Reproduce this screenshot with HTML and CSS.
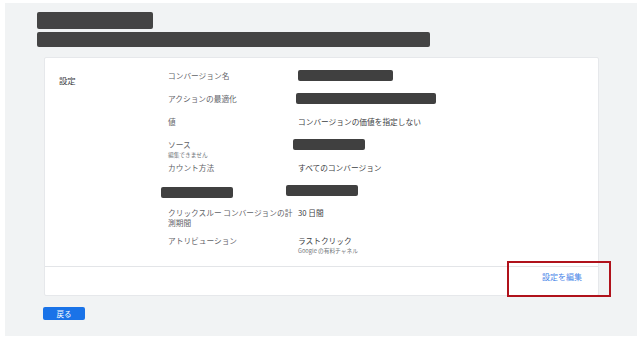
FILE: index.html
```html
<!DOCTYPE html>
<html lang="ja">

<head>
    <meta charset="UTF-8">
    <meta name="viewport" content="width=device-width, initial-scale=1.0">
    <title>コンバージョン設定</title>
    <link rel="stylesheet" href="styles.css">
</head>

<body>
    <div class="page">
        <div class="title-bar title-short"></div>
        <div class="title-bar title-long"></div>

        <div class="card">
            <div class="card-body">
                <div class="section-title">設定</div>
                <div class="rows">
                    <div class="row">
                        <div class="label">コンバージョン名</div>
                        <div class="value"><span class="redact redact-name"></span></div>
                    </div>
                    <div class="row">
                        <div class="label">アクションの最適化</div>
                        <div class="value"><span class="redact redact-action"></span></div>
                    </div>
                    <div class="row">
                        <div class="label">値</div>
                        <div class="value">コンバージョンの価値を指定しない</div>
                    </div>
                    <div class="row row-sub">
                        <div class="label">ソース<div class="sub">編集できません</div></div>
                        <div class="value"><span class="redact redact-source"></span></div>
                    </div>
                    <div class="row">
                        <div class="label">カウント方法</div>
                        <div class="value">すべてのコンバージョン</div>
                    </div>
                    <div class="row">
                        <div class="label"><span class="redact redact-label"></span></div>
                        <div class="value"><span class="redact redact-value"></span></div>
                    </div>
                    <div class="row row-wrap">
                        <div class="label">クリックスルー コンバージョンの計測期間</div>
                        <div class="value">30 日間</div>
                    </div>
                    <div class="row row-last">
                        <div class="label">アトリビューション</div>
                        <div class="value">ラストクリック<div class="sub">Google の有料チャネル</div></div>
                    </div>
                </div>
            </div>
            <div class="card-footer">
                <a href="javascript:;" class="edit-link">設定を編集</a>
            </div>
            <div class="highlight"></div>
        </div>

        <a href="javascript:;" class="back-btn">戻る</a>
    </div>
</body>

</html>
```

FILE: styles.css
```css
body {
    margin: 0;
    background-color: #fff;
    font-family: "Noto Sans CJK JP", "Noto Sans", sans-serif;
}

.page {
    box-sizing: border-box;
    margin: 3px 3px 0 5px;
    width: 632px;
    height: 333px;
    padding: 9px 0 0 32px;
    background-color: #f1f3f4;
}

.title-bar {
    background-color: #444;
    border-radius: 2px;
}

.title-short {
    width: 116px;
    height: 17px;
}

.title-long {
    width: 393px;
    height: 15px;
    margin-top: 3px;
}

.card {
    position: relative;
    width: 555px;
    margin: 10px 0 0 7px;
    background-color: #fff;
    border: 1px solid #e6e8eb;
    border-radius: 2px;
    box-sizing: border-box;
}

.card-body {
    display: flex;
    padding: 12px 0 10px 14px;
    border-bottom: 1px solid #e3e5e8;
}

.section-title {
    width: 109px;
    margin-top: 5px;
    font-size: 8.4px;
    line-height: 11px;
    color: #3c4043;
}

.rows {
    flex: 1;
}

.row {
    display: grid;
    grid-template-columns: 130px 1fr;
    padding-bottom: 12px;
    font-size: 7.7px;
    line-height: 11px;
    color: #5f6368;
}

.row-sub {
    padding-bottom: 2px;
}

.row-wrap {
    padding-bottom: 7px;
    line-height: 10px;
}

.row-last {
    padding-bottom: 0;
}

.value {
    color: #3c4043;
}

.sub {
    font-size: 5.7px;
    line-height: 10px;
    color: #70757a;
}

.redact {
    display: block;
    height: 11px;
    background-color: #404040;
    border-radius: 2px;
}

.redact-name {
    width: 95px;
}

.redact-action {
    width: 140px;
    margin-left: -2px;
}

.redact-source {
    width: 72px;
    margin-left: -5px;
}

.redact-label {
    width: 72px;
    margin: 2px 0 -2px -7px;
}

.redact-value {
    width: 72px;
    margin-left: -12px;
}

.card-footer {
    display: flex;
    justify-content: flex-end;
    height: 28px;
    padding-right: 16px;
}

.edit-link {
    margin-top: 4px;
    font-size: 8px;
    line-height: 11px;
    color: #4a86e8;
    text-decoration: none;
}

.highlight {
    position: absolute;
    right: -13px;
    bottom: -2px;
    width: 104px;
    height: 36px;
    border: 2px solid #b0121b;
    box-sizing: border-box;
}

.back-btn {
    display: block;
    width: 42px;
    height: 13px;
    margin: 11px 0 0 6px;
    background-color: #1a73e8;
    border-radius: 2px;
    color: #fff;
    font-size: 7.5px;
    line-height: 13px;
    text-align: center;
    text-decoration: none;
}
```
